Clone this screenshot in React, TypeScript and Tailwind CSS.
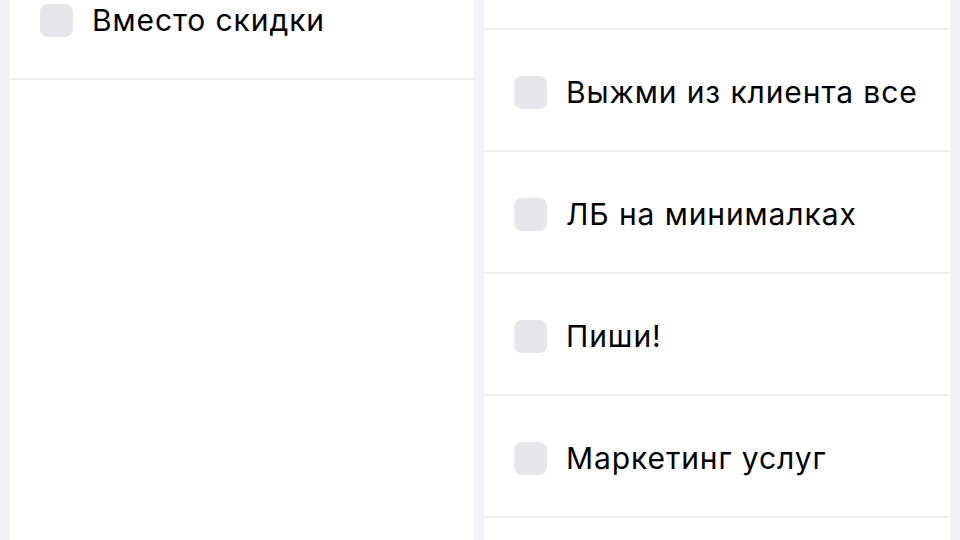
const leftItems = ['Вместо скидки'];
const rightItems = ['Выжми из клиента все', 'ЛБ на минималках', 'Пиши!', 'Маркетинг услуг'];

const Row = ({ label }: { label: string }) => (
  <div className="h-[122px] shrink-0 border-b-2 border-[#efeff3] flex items-center pt-[4px] pl-[30px] gap-[19px]">
    <div className="w-[33px] h-[33px] rounded-[8px] bg-[#e6e6eb] shrink-0" />
    <span className="text-[30px] text-black tracking-[0.9px]">{label}</span>
  </div>
);

export default function App() {
  return (
    <div
      className="h-[540px] w-[960px] overflow-hidden bg-[#f2f2f7] flex gap-[10px] px-[10px]"
      style={{ fontFamily: 'Inter, "Noto Sans", sans-serif' }}
    >
      {/* left list, scrolled up */}
      <div className="w-[464px] bg-white flex flex-col">
        <div className="-mt-[42px]">
          {leftItems.map((t) => (
            <Row key={t} label={t} />
          ))}
        </div>
      </div>

      {/* right list */}
      <div className="w-[466px] bg-white flex flex-col">
        <div className="h-[30px] shrink-0 border-b-2 border-[#efeff3]" />
        {rightItems.map((t) => (
          <Row key={t} label={t} />
        ))}
      </div>
    </div>
  );
}
